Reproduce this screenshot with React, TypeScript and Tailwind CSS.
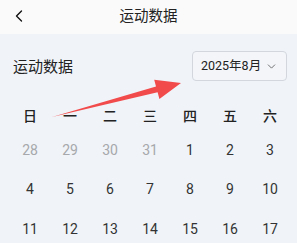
import { ChevronLeft, ChevronDown } from "lucide-react";

const font = { fontFamily: "Roboto, 'Noto Sans CJK SC', sans-serif" };

const weekDays = ["日", "一", "二", "三", "四", "五", "六"];
const days = [
  { d: 28, muted: true },
  { d: 29, muted: true },
  { d: 30, muted: true },
  { d: 31, muted: true },
  ...Array.from({ length: 17 }, (_, i) => ({ d: i + 1, muted: false })),
];

export default function App() {
  return (
    <div
      className="relative w-[297px] h-[243px] overflow-hidden bg-[#f0f3f8] text-[#222]"
      style={font}
    >
      {/* HEADER */}
      <header className="relative h-[34px] bg-[#fafafa] flex items-center justify-center">
        <ChevronLeft
          size={20}
          strokeWidth={1.6}
          className="absolute left-[9px] top-[6px] text-[#111]"
        />
        <h1 className="text-[14.5px] text-[#222]">运动数据</h1>
      </header>

      {/* TITLE ROW */}
      <div className="flex items-center justify-between pt-[17px] pl-[13px] pr-[10px]">
        <span className="text-[15px] mt-[2px]">运动数据</span>
        <button className="shrink-0 h-[30px] w-[95px] rounded-[4px] border border-[#d3d7dd] bg-[#f3f5f9] flex items-center pl-[8px] gap-[4px] whitespace-nowrap">
          <span className="text-[12.5px] text-[#222]">2025年8月</span>
          <ChevronDown size={13} strokeWidth={1.5} className="shrink-0 text-[#555]" />
        </button>
      </div>

      {/* CALENDAR */}
      <div className="ml-[10px] w-[280px] mt-[18px]">
        <div className="grid grid-cols-7 h-[34px] items-center">
          {weekDays.map((w) => (
            <span key={w} className="text-center text-[14px] font-medium text-[#222]">
              {w}
            </span>
          ))}
        </div>
        <div className="grid grid-cols-7 mt-[7px] gap-y-[19.5px]">
          {days.map((x, i) => (
            <span
              key={i}
              className={`h-5 flex items-center justify-center text-[14px] ${
                x.muted ? "text-[#a6a8ab]" : "text-[#333]"
              }`}
            >
              {x.d}
            </span>
          ))}
        </div>
      </div>

      {/* RED ARROW */}
      <svg
        className="absolute left-0 top-0 pointer-events-none"
        width="297"
        height="243"
        viewBox="0 0 297 243"
      >
        <polygon
          points="52,117 156,86.5 154.2,79.7 181,83 159.4,99.1 157.6,92.3"
          fill="#f24b4b"
        />
      </svg>
    </div>
  );
}
